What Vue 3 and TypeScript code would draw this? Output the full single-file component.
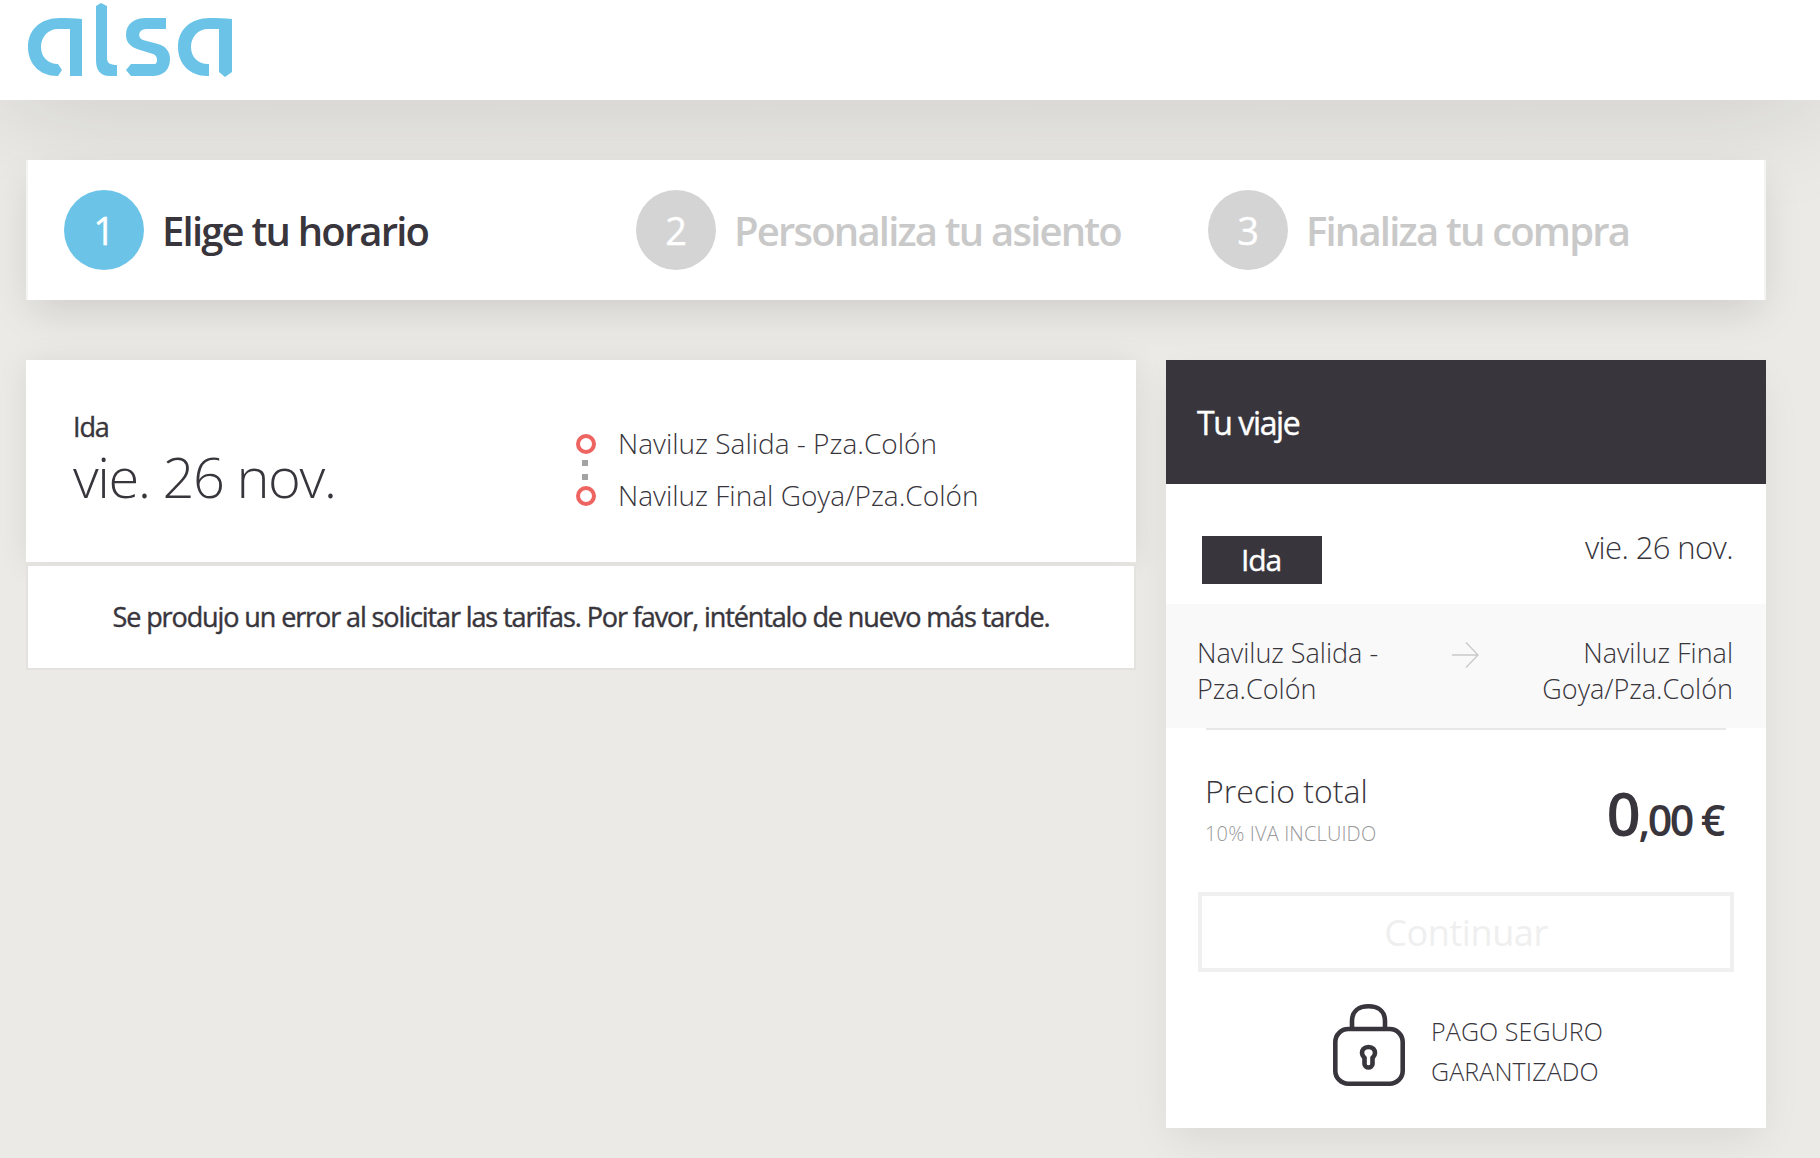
<script setup lang="ts">
const steps = [
  { n: 1, label: "Elige tu horario", active: true },
  { n: 2, label: "Personaliza tu asiento", active: false },
  { n: 3, label: "Finaliza tu compra", active: false },
]
</script>

<template>
  <div class="page">
    <header class="top">
      <svg class="logo" viewBox="0 0 260 100" width="260" height="100" aria-label="alsa">
        <path d="M82 19C74 18 68 18 60 18C40 18 28 30 28 47C28 64 40 76 57 76L58 76L62 70L58 64C48 64 41 57 41 47C41 37 48 29 58 29L70 29L70 76L82 76Z" />
        <path d="M96 6L101 3L107 6L107 58C107 63 110 65 117 65L117 76L110 76C100 76 96 70 96 60Z" />
        <path d="M131 76L126 70L131 64L155 64C158 64 158 55 153 54L140 50C130 47 126 42 126 35C126 24 134 18 146 18L166 18L166 29L146 29C138 29 137 38 143 40L158 44C166 46 170 52 170 59C170 70 163 76 152 76Z" />
        <path d="M232 19C224 18 218 18 210 18C190 18 178 30 178 47C178 64 190 76 207 76L209 76L209 64L208 64C198 64 191 57 191 47C191 37 198 29 208 29L219 29L219 72L225 77L232 72Z" />
      </svg>
    </header>

    <main class="content">
      <section class="stepper">
        <div v-for="s in steps" :key="s.n" class="step" :class="{ active: s.active }">
          <span class="num">{{ s.n }}</span>
          <span class="step-label">{{ s.label }}</span>
        </div>
      </section>

      <div class="columns">
        <div class="left">
          <section class="trip">
            <div class="when">
              <div class="when-type">Ida</div>
              <div class="when-date">vie. 26 nov.</div>
            </div>
            <div class="route">
              <div class="marks">
                <span class="ring"></span>
                <span class="dot"></span>
                <span class="dot"></span>
                <span class="ring"></span>
              </div>
              <div class="stops">
                <span>Naviluz Salida - Pza.Colón</span>
                <span>Naviluz Final Goya/Pza.Colón</span>
              </div>
            </div>
          </section>
          <section class="error">Se produjo un error al solicitar las tarifas. Por favor, inténtalo de nuevo más tarde.</section>
        </div>

        <aside class="summary">
          <div class="summary-head">Tu viaje</div>
          <div class="summary-date">
            <span class="badge">Ida</span>
            <span class="date">vie. 26 nov.</span>
          </div>
          <div class="summary-route">
            <span class="from">Naviluz Salida - Pza.Colón</span>
            <svg class="arrow" width="28" height="28" viewBox="0 0 28 28">
              <path d="M1 14H27M15 1.500L27 14L15 26.500" fill="none" stroke="#c9c9c9" stroke-width="1.300" />
            </svg>
            <span class="to">Naviluz Final Goya/Pza.Colón</span>
          </div>
          <div class="rule"></div>
          <div class="total">
            <div>
              <div class="total-label">Precio total</div>
              <div class="total-note">10% IVA INCLUIDO</div>
            </div>
            <div class="price"><span class="price-int">0</span>,00 €</div>
          </div>
          <button class="next" disabled>Continuar</button>
          <div class="secure">
            <svg width="72" height="82" viewBox="0 0 72 82" fill="none" stroke="#38353c" stroke-width="4.600">
              <rect x="2.300" y="25" width="67.400" height="54.700" rx="13" />
              <path d="M19 25V17C19 7 26 2.300 35.500 2.300C45 2.300 52 7 52 17V25" />
              <path d="M35.500 43C31 43 29 46 29 49C29 51.500 30.500 53 31.500 54V60C31.500 62 33.500 63.500 35.500 63.500C37.500 63.500 39.500 62 39.500 60V54C40.500 53 42 51.500 42 49C42 46 40 43 35.500 43Z" />
            </svg>
            <div class="secure-text">
              <span>PAGO SEGURO</span>
              <span>GARANTIZADO</span>
            </div>
          </div>
        </aside>
      </div>
    </main>
  </div>
</template>

<style>
html, body {
  margin: 0;
  background: #ebeae6;
}
</style>

<style scoped>
.page {
  min-height: 1158px;
  background: #ebeae6;
  font-family: "Open Sans", "Liberation Sans", sans-serif;
  color: #38353c;
  overflow: hidden;
}

.top {
  position: relative;
  height: 100px;
  background: #fff;
  box-shadow: 0 0 120px rgba(0, 0, 0, 0.16);
}

.logo {
  display: block;
  fill: #6bc4e8;
}

.content {
  padding: 60px 54px 0 26px;
}

.stepper {
  position: relative;
  display: grid;
  grid-template-columns: 572px 572px 1fr;
  height: 140px;
  padding-left: 36px;
  align-items: center;
  box-sizing: border-box;
  background: #fff;
  border: solid #f4f4f2;
  border-width: 0 2px;
  box-shadow: 0 16px 40px -6px rgba(0, 0, 0, 0.13);
}

.step {
  display: flex;
  align-items: center;
  gap: 18px;
  color: #c9c9c9;
}

.step.active {
  color: #38353c;
}

.num {
  width: 80px;
  height: 80px;
  border-radius: 50%;
  background: #d4d4d4;
  color: #fff;
  font-size: 38px;
  font-weight: 400;
  text-align: center;
  line-height: 80px;
  -webkit-text-stroke: 0.4px #fff;
}

.active .num {
  background: #6bc4e8;
}

.step-label {
  font-size: 40px;
  font-weight: 600;
  letter-spacing: -1.8px;
}

.columns {
  display: flex;
  justify-content: space-between;
  margin-top: 60px;
}

.left {
  width: 1110px;
}

.trip {
  display: flex;
  height: 202px;
  padding-left: 47px;
  align-items: center;
  box-sizing: border-box;
  background: #fff;
  box-shadow: 0 2px 30px rgba(0, 0, 0, 0.08);
}

.when {
  width: 503px;
  margin-bottom: 6px;
}

.when-type {
  font-size: 27px;
  line-height: 36px;
  letter-spacing: -1.1px;
  -webkit-text-stroke: 0.4px #38353c;
}

.when-date {
  font-size: 56px;
  font-weight: 300;
  line-height: 62px;
  letter-spacing: -1.5px;
}

.route {
  display: flex;
  gap: 22px;
  align-items: center;
  margin-top: 18px;
}

.marks {
  display: flex;
  flex-direction: column;
  align-items: center;
}

.ring {
  box-sizing: border-box;
  width: 20px;
  height: 20px;
  border: 4px solid #ee6461;
  border-radius: 50%;
}

.dot {
  width: 6px;
  height: 6px;
  margin-top: 6px;
  margin-right: 2px;
  background: #a3a3a3;
}

.dot + .dot {
  margin-top: 8px;
  margin-bottom: 6px;
}

.stops {
  display: flex;
  flex-direction: column;
  gap: 16px;
  margin-top: -2px;
  font-size: 28px;
  font-weight: 300;
  line-height: 36px;
}

.error {
  position: relative;
  height: 106px;
  margin-top: 2px;
  box-sizing: border-box;
  background: #fff;
  border: 2px solid #e3e2de;
  font-size: 27px;
  line-height: 102px;
  letter-spacing: -1.1px;
  text-align: center;
  -webkit-text-stroke: 0.4px #38353c;
}

.summary {
  width: 600px;
  height: 768px;
  background: #fff;
  box-shadow: 0 16px 40px -6px rgba(0, 0, 0, 0.08);
}

.summary-head {
  height: 124px;
  padding-left: 31px;
  background: #38353c;
  color: #fff;
  font-size: 32px;
  line-height: 126px;
  letter-spacing: -1.4px;
  -webkit-text-stroke: 0.4px #fff;
}

.summary-date {
  display: flex;
  justify-content: space-between;
  height: 120px;
  padding: 52px 33px 0 36px;
  box-sizing: border-box;
}

.badge {
  width: 118px;
  height: 48px;
  padding-right: 2px;
  background: #38353c;
  color: #fff;
  font-size: 30px;
  line-height: 48px;
  text-align: center;
  letter-spacing: -1.1px;
  -webkit-text-stroke: 0.4px #fff;
}

.date {
  margin-top: -11px;
  font-size: 31px;
  font-weight: 300;
  line-height: 44px;
  letter-spacing: -0.6px;
}

.summary-route {
  display: flex;
  justify-content: space-between;
  align-items: flex-start;
  height: 124px;
  padding: 31px 33px 0 31px;
  box-sizing: border-box;
  background: #f9f9f9;
  font-size: 27px;
  font-weight: 300;
  line-height: 36px;
}

.from,
.to {
  width: 200px;
}

.to {
  text-align: right;
}

.arrow {
  margin-top: 6px;
}

.rule {
  height: 2px;
  margin: 0 40px;
  background: #e8e8e6;
}

.total {
  display: flex;
  justify-content: space-between;
  padding: 39px 43px 0 39px;
  height: 162px;
  box-sizing: border-box;
}

.total-label {
  font-size: 32px;
  font-weight: 300;
  line-height: 44px;
}

.total-note {
  margin-top: 6px;
  font-size: 20px;
  font-weight: 300;
  line-height: 30px;
  letter-spacing: 0.15px;
  color: #999;
}

.price {
  margin-top: 10px;
  font-size: 43px;
  font-weight: 600;
  letter-spacing: -2.4px;
  line-height: 68px;
}

.price-int {
  font-size: 60px;
}

.next {
  display: block;
  width: 536px;
  height: 80px;
  margin-left: 32px;
  padding: 0;
  background: #fff;
  border: 4px solid #f0f0f0;
  color: #efefef;
  font-family: inherit;
  font-size: 36px;
  font-weight: 400;
  letter-spacing: -0.4px;
}

.secure {
  display: flex;
  justify-content: center;
  align-items: flex-start;
  gap: 26px;
  margin-top: 32px;
  padding-left: 4px;
}

.secure-text {
  display: flex;
  flex-direction: column;
  margin-top: 7px;
  font-size: 25px;
  font-weight: 300;
  line-height: 40px;
  letter-spacing: 0.1px;
}
</style>
